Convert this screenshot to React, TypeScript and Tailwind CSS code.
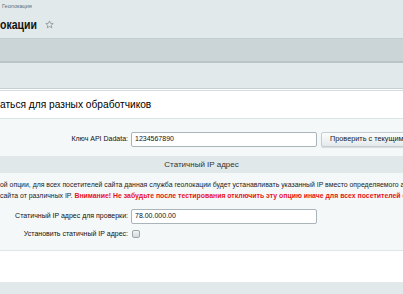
import React from "react";

export default function App() {
  return (
    <div
      className="w-[403px] h-[294px] overflow-hidden bg-[#e2e9eb] flex flex-col"
      style={{ fontFamily: '"Liberation Sans", Arial, sans-serif' }}
    >
      <div className="h-[13px] pt-[3px] pl-[2px] text-[5.5px] leading-[7px] text-[#4d6f86]">Геолокация</div>
      <div className="h-[25px] flex items-center gap-[8px] pb-[3px]">
        <span className="text-[10.5px] font-bold text-[#111] leading-none scale-y-[1.3] origin-center">окации</span>
        <svg width="9" height="9" viewBox="0 0 24 24" fill="none" stroke="#8a9499" strokeWidth="2.2" strokeLinejoin="round">
          <path d="M12 2.5l2.9 6.3 6.9.7-5.2 4.6 1.5 6.8L12 17.4l-6.1 3.5 1.5-6.8-5.2-4.6 6.9-.7z" />
        </svg>
      </div>
      <div className="h-[25px] bg-[#cbd4d6] border-t border-[#c3ccce] border-b-2 border-b-[#bac4c6]" />
      <div className="h-[25px] bg-[#e2e9eb]" />
      <div className="h-[3px] border-t border-[#c6cfd2] border-b border-b-[#d5dde0] bg-white" />
      <div className="bg-white flex-1 flex flex-col">
        <div className="h-[28px] flex items-center border-b border-[#dce4e6] text-[10.2px] text-[#000] pt-[1px]">
          аться для разных обработчиков
        </div>
        <div className="bg-[#f5f8f9] h-[132px] border-b border-[#dfe6e8] flex flex-col text-[7px] text-[#111]">
          <div className="mt-[13px] flex items-center h-[15px]">
            <div className="w-[128px] shrink-0 text-right whitespace-nowrap">Ключ API Dadata:</div>
            <div className="ml-[3px] shrink-0 w-[186px] h-[15px] bg-white border border-[#a9b5b9] rounded-[2px] flex items-center pl-[3px] text-[7px]">1234567890</div>
            <div className="ml-[4px] h-[15px] shrink-0 w-[100px] rounded-[2px] border border-[#c4cdd0] bg-gradient-to-b from-[#fbfcfc] to-[#e4eaec] flex items-center pl-[8px] text-[7.3px] text-[#222] whitespace-nowrap shadow-[0_1px_1px_rgba(0,0,0,0.12)]">
              Проверить с текущим
            </div>
          </div>
          <div className="mt-[9px] h-[17px] bg-[#e0e8ea] flex items-center justify-center text-[8px] text-[#333]">
            Статичный IP адрес
          </div>
          <div className="mt-[6px] whitespace-nowrap leading-[11px] text-[6.9px] text-[#222]">
            <div>ой опции, для всех посетителей сайта данная служба геолокации будет устанавливать указанный IP вместо определяемого автоматически</div>
            <div>
              сайта от различных IP. <span className="text-[#e8141b] font-bold">Внимание! Не забудьте после тестирования отключить эту опцию иначе для всех посетителей сайта</span>
            </div>
          </div>
          <div className="mt-[8px] flex items-center h-[15px]">
            <div className="w-[128px] shrink-0 text-right whitespace-nowrap">Статичный IP адрес для проверки:</div>
            <div className="ml-[3px] shrink-0 w-[186px] h-[15px] bg-white border border-[#a9b5b9] rounded-[2px] flex items-center pl-[3px] text-[7px]">78.00.000.00</div>
          </div>
          <div className="mt-[5px] flex items-center h-[10px]">
            <div className="w-[128px] shrink-0 text-right whitespace-nowrap">Установить статичный IP адрес:</div>
            <div className="ml-[4px] shrink-0 w-[8px] h-[8px] rounded-[2px] border border-[#9aa6aa] bg-gradient-to-b from-[#f2f4f5] to-[#d3d9dc]" />
          </div>
        </div>
        <div className="h-[31px] bg-white" />
        <div className="flex-1 bg-[#e2e9eb]" />
      </div>
    </div>
  );
}
